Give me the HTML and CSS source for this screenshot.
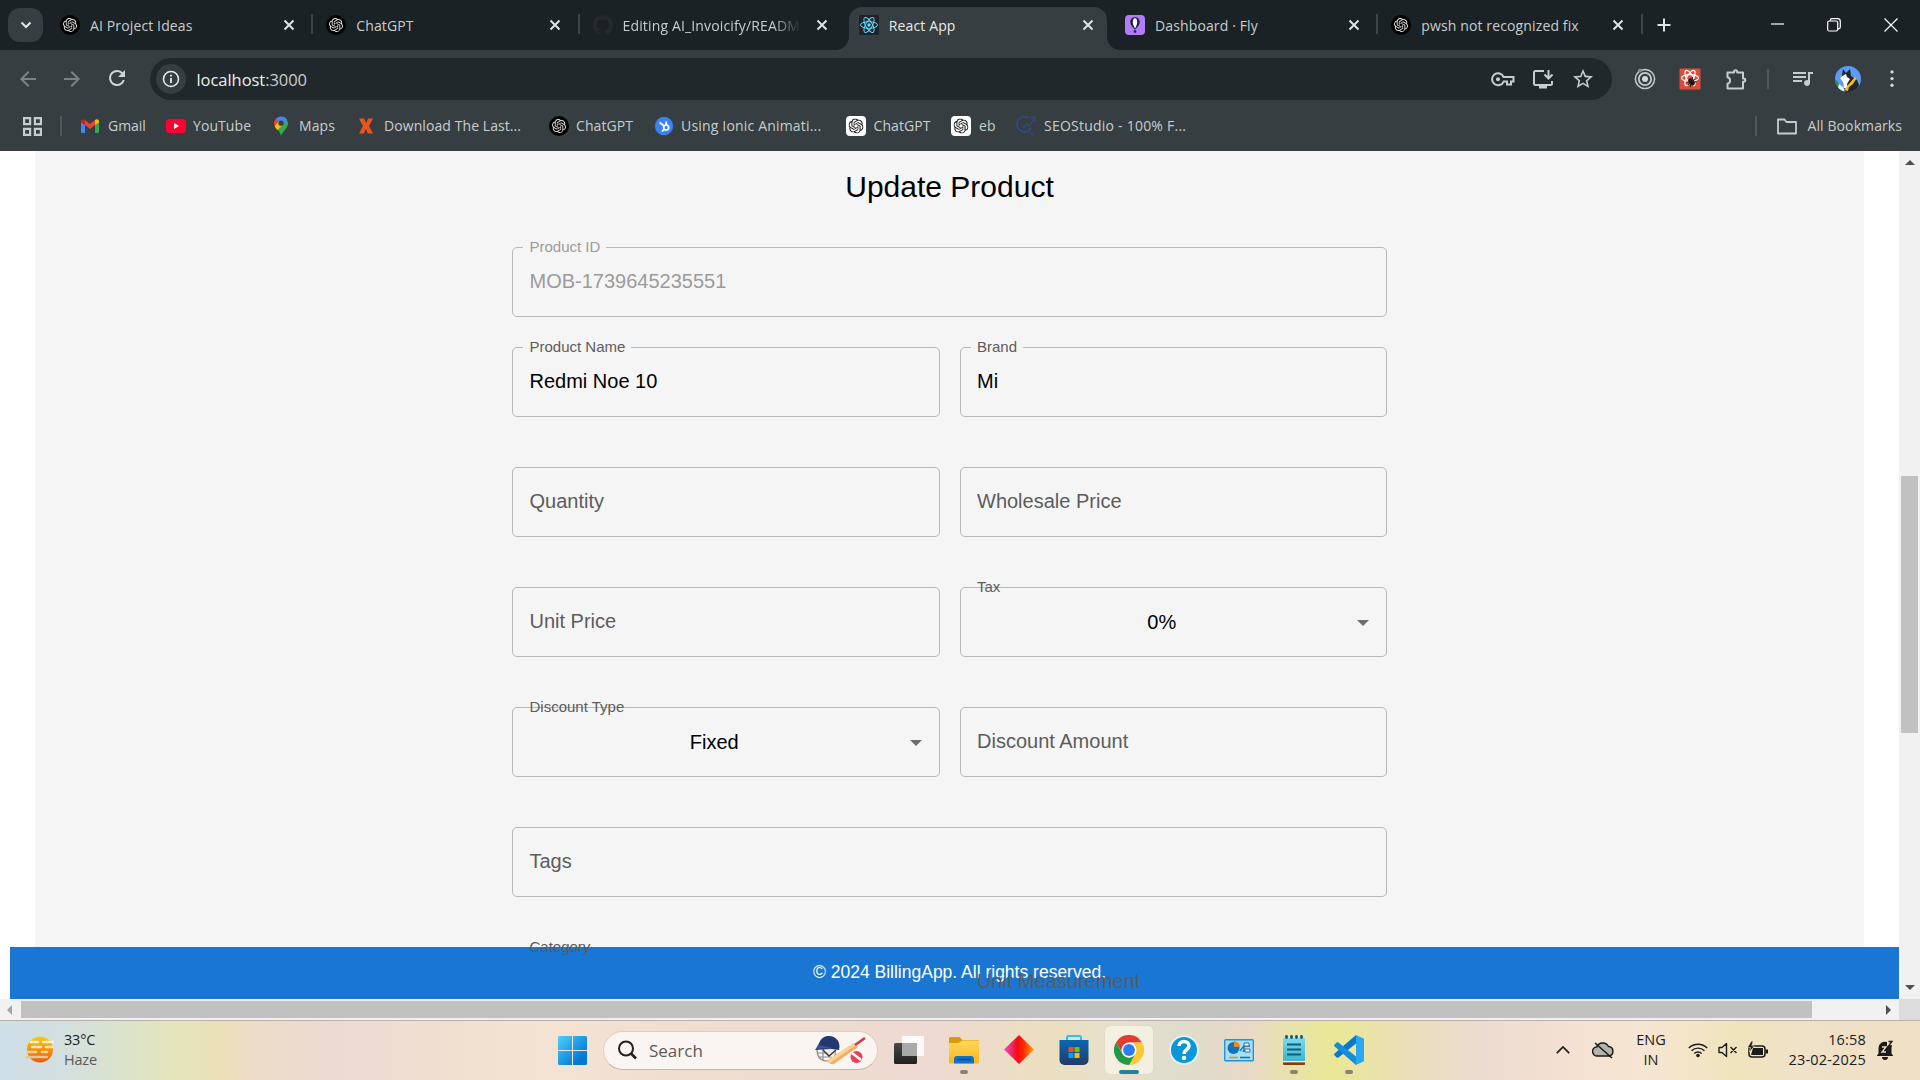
FILE: index.html
```html
<!DOCTYPE html>
<html lang="en">
<head>
<meta charset="utf-8">
<title>React App</title>
<link rel="stylesheet" href="styles.css">
</head>
<body>
<svg class="defs" aria-hidden="true">
  <symbol id="gpt" viewBox="0 0 24 24"><path d="M22.2819 9.8211a5.9847 5.9847 0 0 0-.5157-4.9108 6.0462 6.0462 0 0 0-6.5098-2.9A6.0651 6.0651 0 0 0 4.9807 4.1818a5.9847 5.9847 0 0 0-3.9977 2.9 6.0462 6.0462 0 0 0 .7427 7.0966 5.98 5.98 0 0 0 .511 4.9107 6.051 6.051 0 0 0 6.5146 2.9001A5.9847 5.9847 0 0 0 13.2599 24a6.0557 6.0557 0 0 0 5.7718-4.2058 5.9894 5.9894 0 0 0 3.9977-2.9001 6.0557 6.0557 0 0 0-.7475-7.0729zm-9.022 12.6081a4.4755 4.4755 0 0 1-2.8764-1.0408l.1419-.0804 4.7783-2.7582a.7948.7948 0 0 0 .3927-.6813v-6.7369l2.02 1.1686a.071.071 0 0 1 .038.052v5.5826a4.504 4.504 0 0 1-4.4945 4.4944zm-9.6607-4.1254a4.4708 4.4708 0 0 1-.5346-3.0137l.142.0852 4.783 2.7582a.7712.7712 0 0 0 .7806 0l5.8428-3.3685v2.3324a.0804.0804 0 0 1-.0332.0615L9.74 19.9502a4.4992 4.4992 0 0 1-6.1408-1.6464zM2.3408 7.8956a4.485 4.485 0 0 1 2.3655-1.9728V11.6a.7664.7664 0 0 0 .3879.6765l5.8144 3.3543-2.0201 1.1685a.0757.0757 0 0 1-.071 0l-4.8303-2.7865A4.504 4.504 0 0 1 2.3408 7.872zm16.5963 3.8558L13.1038 8.364 15.1192 7.2a.0757.0757 0 0 1 .071 0l4.8303 2.7913a4.4944 4.4944 0 0 1-.6765 8.1042v-5.6772a.79.79 0 0 0-.407-.667zm2.0107-3.0231l-.142-.0852-4.7735-2.7818a.7759.7759 0 0 0-.7854 0L9.409 9.2297V6.8974a.0662.0662 0 0 1 .0284-.0615l4.8303-2.7866a4.4992 4.4992 0 0 1 6.6802 4.66zM8.3065 12.863l-2.02-1.1638a.0804.0804 0 0 1-.038-.0567V6.0742a4.4992 4.4992 0 0 1 7.3757-3.4537l-.142.0805L8.704 5.459a.7948.7948 0 0 0-.3927.6813zm1.0976-2.3654l2.602-1.4998 2.6069 1.4998v2.9994l-2.5974 1.4997-2.6067-1.4997Z"/></symbol>
  <symbol id="gpt-dark" viewBox="0 0 20 20"><circle cx="10" cy="10" r="10" fill="#000"/><use href="#gpt" x="3" y="3" width="14" height="14" fill="#e4e4e4"/></symbol>
  <symbol id="gpt-light" viewBox="0 0 20 20"><rect width="20" height="20" rx="4" fill="#fff"/><use href="#gpt" x="2.5" y="2.5" width="15" height="15" fill="#111"/></symbol>
  <symbol id="x" viewBox="0 0 12 12"><path d="M1.5 1.5l9 9M10.5 1.5l-9 9" fill="none" stroke="currentColor" stroke-width="2"/></symbol>
</svg>

<header class="browser">
  <div class="tabstrip">
    <div class="tab-search"><svg width="12" height="8" viewBox="0 0 12 8"><path d="M1.5 1.5L6 6l4.500-4.500" fill="none" stroke="#dfe3e4" stroke-width="2.200"/></svg></div>
    <div class="tabs">
      <div class="tab"><svg class="fav"><use href="#gpt-dark"/></svg><span class="tab-title">AI Project Ideas</span><svg class="tab-x"><use href="#x"/></svg></div>
      <div class="tab"><svg class="fav"><use href="#gpt-dark"/></svg><span class="tab-title">ChatGPT</span><svg class="tab-x"><use href="#x"/></svg></div>
      <div class="tab no-sep"><svg class="fav" viewBox="0 0 24 24"><path fill="#262a2e" d="M12 .3a12 12 0 0 0-3.800 23.400c.6.1.8-.3.8-.6v-2c-3.300.7-4-1.600-4-1.600-.6-1.400-1.400-1.800-1.400-1.800-1-.7.1-.7.1-.7 1.200 0 1.900 1.200 1.900 1.200 1 1.800 2.800 1.300 3.500 1 0-.8.4-1.300.7-1.600-2.700-.3-5.500-1.300-5.500-6 0-1.200.5-2.300 1.300-3.100-.2-.4-.6-1.600 0-3.200 0 0 1-.3 3.400 1.200a11.500 11.500 0 0 1 6 0c2.300-1.500 3.300-1.200 3.300-1.200.6 1.600.2 2.800 0 3.200.9.8 1.300 1.900 1.300 3.200 0 4.600-2.800 5.600-5.500 5.900.5.4.9 1 .9 2.200v3.300c0 .3.1.7.8.6A12 12 0 0 0 12 .3"/></svg><span class="tab-title fade">Editing AI_Invoicify/README.md</span><svg class="tab-x"><use href="#x"/></svg></div>
      <div class="tab active no-sep"><svg class="fav" viewBox="0 0 20 20"><rect width="20" height="20" rx="1.500" fill="#20232a"/><g fill="none" stroke="#61dafb" stroke-width="1"><ellipse cx="10" cy="10" rx="8.500" ry="3.300"/><ellipse cx="10" cy="10" rx="8.500" ry="3.300" transform="rotate(60 10 10)"/><ellipse cx="10" cy="10" rx="8.500" ry="3.300" transform="rotate(120 10 10)"/></g><circle cx="10" cy="10" r="1.700" fill="#61dafb"/></svg><span class="tab-title">React App</span><svg class="tab-x"><use href="#x"/></svg></div>
      <div class="tab"><svg class="fav" viewBox="0 0 20 20"><rect width="20" height="20" rx="4" fill="#b07df5"/><path d="M10 2.200c3 0 4.700 2.200 4.700 4.800 0 2.600-1.700 4.600-4.700 7.800-3-3.200-4.700-5.200-4.700-7.800 0-2.600 1.700-4.800 4.700-4.800z" fill="#261a4f"/><path d="M10 3.200c1.700 0 2.200 2 2.200 3.800S11.400 11.300 10 13.500C8.600 11.300 7.800 8.800 7.800 7s.5-3.800 2.200-3.800z" fill="#fff"/><rect x="8.700" y="15.200" width="2.600" height="2.500" rx=".8" fill="#261a4f"/></svg><span class="tab-title">Dashboard · Fly</span><svg class="tab-x"><use href="#x"/></svg></div>
      <div class="tab last"><svg class="fav"><use href="#gpt-dark"/></svg><span class="tab-title">pwsh not recognized fix</span><svg class="tab-x"><use href="#x"/></svg></div>
    </div>
    <svg class="new-tab" viewBox="0 0 14 14"><path d="M7 .5v13M.5 7h13" stroke="#dfe3e4" stroke-width="2"/></svg>
    <div class="win-controls">
      <svg width="14" height="14" viewBox="0 0 14 14"><path d="M1 6h13" stroke="#fff" stroke-width="1.200"/></svg>
      <svg width="14" height="14" viewBox="0 0 14 14"><g fill="none" stroke="#fff" stroke-width="1.200"><rect x=".7" y="3" width="10" height="10" rx="1.500"/><path d="M3.200 3V2.500A1.800 1.800 0 0 1 5 .7h5.500a2.800 2.800 0 0 1 2.800 2.800V9a1.800 1.800 0 0 1-1.800 1.800H11"/></g></svg>
      <svg width="14" height="14" viewBox="0 0 14 14"><path d="M.5.5l13 13M13.500.5l-13 13" stroke="#fff" stroke-width="1.200"/></svg>
    </div>
  </div>

  <div class="toolbar">
    <div class="nav">
      <svg class="dim" viewBox="0 0 24 24"><path d="M20 11H7.830l5.590-5.590L12 4l-8 8 8 8 1.410-1.410L7.830 13H20z"/></svg>
      <svg class="dim" viewBox="0 0 24 24"><path d="M4 13h12.170l-5.590 5.590L12 20l8-8-8-8-1.410 1.410L16.170 11H4z"/></svg>
      <svg viewBox="0 0 24 24"><path d="M17.650 6.350A7.950 7.950 0 0 0 12 4a8 8 0 1 0 7.730 10h-2.080A6 6 0 1 1 12 6c1.660 0 3.140.69 4.220 1.780L13 11h7V4z"/></svg>
    </div>
    <div class="omnibox">
      <span class="site-info"><svg viewBox="0 0 20 20" width="20" height="20"><circle cx="10" cy="10" r="7.500" fill="none" stroke="#e8eaea" stroke-width="1.600"/><path d="M10 9v5M10 5.800v1.800" stroke="#e8eaea" stroke-width="1.800"/></svg></span>
      <span class="url"><b>localhost</b>:3000</span>
      <div class="omni-icons">
        <svg viewBox="0 0 24 24"><g fill="none" stroke="#c7cccd" stroke-width="2"><path d="M12.600 10a6 6 0 1 0 0 4.500H16v3h4v-3h2.500V10z"/></g><circle cx="7" cy="12.200" r="2" fill="#c7cccd"/></svg>
        <svg viewBox="0 0 24 24"><path d="M13 4H4.500A1.500 1.500 0 0 0 3 5.500v11A1.500 1.500 0 0 0 4.500 18h15a1.500 1.500 0 0 0 1.500-1.500V14M17.500 3v8M13.500 7.500l4 4 4-4" fill="none" stroke="#c7cccd" stroke-width="2"/><path d="M8 18h8v3.500H8z" fill="#c7cccd"/></svg>
        <svg viewBox="0 0 24 24"><path fill="#c7cccd" d="M22 9.240l-7.190-.62L12 2 9.190 8.630 2 9.240l5.460 4.730L5.820 21 12 17.270 18.180 21l-1.630-7.030zM12 15.400l-3.760 2.270 1-4.280-3.320-2.880 4.380-.38L12 6.100l1.710 4.040 4.380.38-3.320 2.880 1 4.280z"/></svg>
      </div>
    </div>
    <div class="extensions">
      <svg viewBox="0 0 22 22"><g fill="none" stroke="#c9cccd"><circle cx="11" cy="11" r="9.600" stroke-width="1.500"/><circle cx="11" cy="11" r="6.200" stroke-width="1.800"/></g><circle cx="11" cy="11" r="3" fill="#d5d8d9"/><circle cx="6" cy="2.500" r="2" fill="#8b8f90"/></svg>
      <svg viewBox="0 0 22 22"><rect x=".5" y=".5" width="21" height="21" rx="1" fill="#dd4b39"/><g fill="none" stroke="#fff" stroke-width="1.200"><ellipse cx="11" cy="10" rx="8.500" ry="3.300"/><ellipse cx="11" cy="10" rx="8.500" ry="3.300" transform="rotate(60 11 10)"/><ellipse cx="11" cy="10" rx="8.500" ry="3.300" transform="rotate(120 11 10)"/></g><g transform="rotate(-40 12.500 14)"><ellipse cx="12.500" cy="14" rx="2.600" ry="4" fill="#2a1614"/><path d="M8.500 11l8 6M8.500 17l8-6M8 14h9" stroke="#2a1614" stroke-width="1.100"/></g></svg>
      <svg viewBox="0 0 22 22"><path d="M2.500 4.500h6.500V3.800a1.600 1.600 0 0 1 3.200 0v.7h5.800v6h.7a1.600 1.600 0 0 1 0 3.200H18V20.500H2.500v-4.700a3.400 3.400 0 0 0 0-6.600z" fill="none" stroke="#c7cccd" stroke-width="2" stroke-linejoin="round"/></svg>
      <i class="bar"></i>
      <svg viewBox="0 0 24 24"><path fill="#c7cccd" d="M15 5H2v2h13zm0 4H2v2h13zM2 15h9v-2H2zM17 5v8.180A3 3 0 1 0 19 16V7h3V5z"/></svg>
      <svg class="avatar" viewBox="0 0 26 26"><clipPath id="av"><circle cx="13" cy="13" r="13"/></clipPath><g clip-path="url(#av)"><path fill="#5b9bf5" d="M0 0h26v26H0z"/><path fill="#2e8a4e" d="M0 13l3 3 3 6-2 4H0z"/><path fill="#e4f2ff" d="M4 18l5 4v4H2z"/><path fill="#23262c" d="M7 9L8 3l3 4 4-4 1 7 6 4 2 5-3 7H10z"/><path fill="#fff" d="M5 12l4-3 2-1 1 3 3 2-3 5 1 4H9l-1-6z"/><path fill="#fbbd1e" d="M20 11l1.500 1.500L18 18l-4 3-1 4-4-1 4-5z"/></g></svg>
      <svg viewBox="0 0 24 24"><g fill="#d5d9da"><circle cx="12" cy="3.500" r="2"/><circle cx="12" cy="11.500" r="2"/><circle cx="12" cy="19.500" r="2"/></g></svg>
    </div>
  </div>

  <div class="bookmarks">
    <svg class="apps" viewBox="0 0 19 19"><g fill="none" stroke="#c7cccd" stroke-width="2.200"><path d="M1.100 1.100h6v6h-6zM11.900 1.100h6v6h-6zM1.100 11.900h6v6h-6zM11.900 11.900h6v6h-6z"/></g></svg>
    <i class="bar"></i>
    <a class="bm bm-gmail"><svg viewBox="0 0 20 20"><path fill="#4285f4" d="M1 5l4 3v9H2a1 1 0 0 1-1-1z"/><path fill="#34a853" d="M19 5l-4 3v9h3a1 1 0 0 0 1-1z"/><path fill="#ea4335" d="M5 4l5 4 5-4v5l-5 4-5-4z"/><path fill="#c5221f" d="M1 5.500C1 3.500 3.300 2.500 5 4v5L1 6.500z"/><path fill="#fbbc04" d="M19 5.500c0-2-2.300-3-4-1.500v5l4-2.500z"/></svg><span>Gmail</span></a>
    <a class="bm bm-yt"><svg viewBox="0 0 20 20"><rect y="3" width="20" height="14" rx="3.500" fill="#ff0033"/><path d="M8 7v6l5-3z" fill="#fff"/></svg><span>YouTube</span></a>
    <a class="bm bm-maps"><svg viewBox="0 0 20 20"><path fill="#34a853" d="M10 20c-.8-3.600-2.500-5.500-4.300-7.700L14 3l2.300 1.500A7 7 0 0 1 17 7.500c0 5-5.400 7.500-7 12.500z"/><path fill="#4285f4" d="M5 2.500A7 7 0 0 1 16 3.800L9.500 12z"/><path fill="#ea4335" d="M5 2.500L8.200 6 4 10.500A7 7 0 0 1 5 2.500z"/><path fill="#fbbc04" d="M3.600 10l4.500-5 3.800 3.800-5.400 5.500A14 14 0 0 1 3.600 10z"/><path fill="#4285f4" d="M12 6.300l4-2.500a7 7 0 0 0-3.500-3z"/><circle cx="10" cy="7.200" r="2.600" fill="#363e41"/></svg><span>Maps</span></a>
    <a class="bm bm-x"><svg viewBox="0 0 20 20"><path fill="#e8541c" d="M3 2.500h5L10.200 7l2-4.500H17L13 10l4 7.500h-5L9.800 13l-2 4.500H3L7 10z"/></svg><span>Download The Last...</span></a>
    <a class="bm bm-gpt"><svg><use href="#gpt-dark"/></svg><span>ChatGPT</span></a>
    <a class="bm bm-ionic"><svg viewBox="0 0 20 20"><circle cx="10" cy="10" r="9.200" fill="#3b82f6"/><g fill="none" stroke="#fff" stroke-width="1.700"><circle cx="12.200" cy="11.500" r="2.500"/><path d="M12.200 9V5.500M10.300 10L5.500 6.500M10.300 13.200L8 15.500"/></g></svg><span>Using Ionic Animati...</span></a>
    <a class="bm bm-gpt2"><svg><use href="#gpt-light"/></svg><span>ChatGPT</span></a>
    <a class="bm bm-eb"><svg><use href="#gpt-light"/></svg><span>eb</span></a>
    <a class="bm bm-seo"><svg viewBox="0 0 20 20"><g fill="none" stroke="#2f4a8c" stroke-width="1.700"><path d="M12.500 2A7.500 7.500 0 1 0 15 12"/><path d="M12.500 14.500l4.500 5M7 12l4-4 2 2 6-8M14.500 1.500H19V6" stroke-width="1.300"/></g></svg><span>SEOStudio - 100% F...</span></a>
    <i class="bar bar-end"></i>
    <a class="bm bm-all"><svg viewBox="0 0 20 20"><path d="M1 3.500h6.500l2 2.500H19v11.500H1z" fill="none" stroke="#c7cccd" stroke-width="1.800" stroke-linejoin="round"/></svg><span>All Bookmarks</span></a>
  </div>
</header>

<div class="viewport">
  <main class="page">
    <div class="panel">
      <h1>Update Product</h1>
      <form class="form">
        <div class="field wide first disabled"><label class="small notched">Product ID</label><span>MOB-1739645235551</span></div>
        <div class="field"><label class="small notched">Product Name</label><span>Redmi Noe 10</span></div>
        <div class="field"><label class="small notched">Brand</label><span>Mi</span></div>
        <div class="field"><label>Quantity</label></div>
        <div class="field"><label>Wholesale Price</label></div>
        <div class="field"><label>Unit Price</label></div>
        <div class="field select"><label class="small">Tax</label><span>0%</span></div>
        <div class="field select"><label class="small">Discount Type</label><span>Fixed</span></div>
        <div class="field"><label>Discount Amount</label></div>
        <div class="field wide"><label>Tags</label></div>
        <div class="field select"><label class="small">Category</label></div>
        <div class="field"><label>Unit Measurement</label></div>
      </form>
    </div>
    <footer class="footer">© 2024 BillingApp. All rights reserved.</footer>
  </main>
  <div class="vscroll"><i class="arrow up"></i><i class="vthumb"></i><i class="arrow down"></i></div>
  <div class="hscroll"><i class="arrow left"></i><i class="hthumb"></i><i class="arrow right"></i></div>
  <div class="corner"></div>
</div>

<div class="taskbar">
  <div class="weather">
    <svg width="32" height="32" viewBox="0 0 32 32"><defs><linearGradient id="sun" x2="0" y2="1"><stop offset="0" stop-color="#ffcc0a"/><stop offset="1" stop-color="#e8590c"/></linearGradient></defs><circle cx="16" cy="15.500" r="13" fill="url(#sun)"/><g stroke-linecap="round" stroke-width="2.600"><path d="M7 8h7M19 8h10" stroke="#f8efd2"/><path d="M8 13h9M22 13h6" stroke="#f8e6b8"/><path d="M3 18h9M18 18h5" stroke="#f0d29c"/><path d="M3 23h20" stroke="#e3c69a"/></g></svg>
    <div class="weather-text"><span>33°C</span><span class="muted">Haze</span></div>
  </div>
  <div class="dock">
    <span class="app start"><svg width="29" height="29" viewBox="0 0 29 29"><defs><linearGradient id="win" x2="1" y2="1"><stop offset="0" stop-color="#4fd0ff"/><stop offset=".8" stop-color="#0078d4"/></linearGradient></defs><path fill="url(#win)" d="M1 0h13v14H0V1zM15 0h13l1 1v13H15zM0 15h14v14H1l-1-1zM15 15h14v13l-1 1H15z"/></svg></span>
    <div class="search">
      <svg width="20" height="20" viewBox="0 0 20 20"><circle cx="9" cy="8.500" r="7" fill="none" stroke="#222" stroke-width="2"/><path d="M14 13.500l5 5" stroke="#222" stroke-width="2.600"/></svg>
      <span>Search</span>
      <svg class="cricket" width="52" height="30" viewBox="0 0 52 30"><g fill="none" stroke="#8f8d8c" stroke-width="1.200"><path d="M3 14c0 7 3 12 10 12s9-4 8-11M3 18h12M5 22h13M9 14v11"/></g><path d="M13 14l9 1-4 7-4-2z" fill="#f2ece8"/><path d="M9 15l6 6 7-6" fill="none" stroke="#3a3432" stroke-width="1.400"/><path d="M1 15C5 13 4 2 14 1c9-.5 13 7 11 14l-8-1z" fill="#22386e"/><path d="M1 15c4-2 10-2 15-1l2-1-14-3z" fill="#3b5796"/><path d="M40 8l4 4-24 17c-3 1-6-1-6-4z" fill="#f0ae66"/><path d="M40 8l2 2-26 18-2-3z" fill="#ffd196"/><path d="M41 10l10-7" stroke="#d8344e" stroke-width="2.600"/><circle cx="42.500" cy="22" r="6" fill="#e83e5c"/><path d="M38 18l9 7" stroke="#fff" stroke-width="2.500"/></svg>
    </div>
    <span class="app"><svg width="30" height="30" viewBox="0 0 30 30"><defs><linearGradient id="tv" x2="0" y2="1"><stop offset="0" stop-color="#4a4a4a"/><stop offset="1" stop-color="#202020"/></linearGradient></defs><rect y="8" width="23" height="21" rx="1.500" fill="url(#tv)"/><rect x="8" y="1" width="22" height="20" rx="1" fill="#fff" opacity=".85"/><path d="M8 8h15v13H9a1 1 0 0 1-1-1z" fill="#a9a9a9"/></svg></span>
    <span class="app run"><svg width="30" height="30" viewBox="0 0 30 30"><defs><linearGradient id="fo" x2="0" y2="1"><stop offset="0" stop-color="#ffd75e"/><stop offset="1" stop-color="#fbb514"/></linearGradient></defs><path d="M0 3.500A1.500 1.500 0 0 1 1.500 2h9l3 3H29a1 1 0 0 1 1 1v4H0z" fill="#dc9a08"/><path d="M0 8h9.500l4-2.500H30v21.500a1.500 1.500 0 0 1-1.500 1.500h-27A1.500 1.500 0 0 1 0 27z" fill="url(#fo)"/><path d="M5 28.500V24a3 3 0 0 1 3-3h14a3 3 0 0 1 3 3v4.500z" fill="#0f74c8"/><path d="M9 24.500h12" stroke="#084a86" stroke-width="1.500" stroke-linecap="round"/></svg></span>
    <span class="app"><svg width="30" height="30" viewBox="0 0 30 30"><defs><linearGradient id="di"><stop offset="0" stop-color="#f04bd0"/><stop offset=".45" stop-color="#f60a14"/><stop offset=".65" stop-color="#ff2a00"/><stop offset="1" stop-color="#ffa61a"/></linearGradient></defs><path d="M15 0l15 14.500L15 29 0 14.500z" fill="url(#di)"/></svg></span>
    <span class="app"><svg width="30" height="30" viewBox="0 0 30 30"><defs><linearGradient id="st" x2="0" y2="1"><stop offset="0" stop-color="#0967b4"/><stop offset="1" stop-color="#223a66"/></linearGradient></defs><path d="M8 7V2.500A1.500 1.500 0 0 1 9.500 1h11A1.500 1.500 0 0 1 22 2.500V7" fill="none" stroke="#2cc0f4" stroke-width="2"/><path d="M.5 5h29v20a5 5 0 0 1-5 5h-19a5 5 0 0 1-5-5z" fill="url(#st)"/><path fill="#f25022" d="M9.500 12h5v5h-5z"/><path fill="#7fba00" d="M15.500 12h5v5h-5z"/><path fill="#00a4ef" d="M9.500 18h5v5h-5z"/><path fill="#ffb900" d="M15.500 18h5v5h-5z"/></svg></span>
    <span class="app current"><svg width="30" height="30" viewBox="0 0 48 48"><path fill="#e33b2e" d="M3.200 12A24 24 0 0 1 44.800 12H24L14 30z"/><path fill="#fcc934" d="M44.800 12A24 24 0 0 1 24 48l10.400-18L32 12z"/><path fill="#1e9a48" d="M3.200 12l10.400 18A12 12 0 0 0 34.400 30L24 48A24 24 0 0 1 3.200 12z"/><circle cx="24" cy="24" r="12" fill="#fff"/><circle cx="24" cy="24" r="9.500" fill="#2f7cf0"/></svg></span>
    <span class="app"><svg width="30" height="30" viewBox="0 0 30 30"><circle cx="15" cy="15" r="14.800" fill="#e6f3fa"/><circle cx="15" cy="15" r="13" fill="#0a97d9"/><path d="M10 11c0-6 10-6 10 0 0 3.500-5 4-5 8" fill="none" stroke="#fff" stroke-width="3.600"/><circle cx="15" cy="23" r="2.200" fill="#fff"/></svg></span>
    <span class="app"><svg width="30" height="30" viewBox="0 0 30 30"><rect x=".7" y="4.700" width="28.600" height="21" rx="1" fill="#a9e0f8" stroke="#2494d4" stroke-width="1.400"/><circle cx="9.500" cy="13" r="6" fill="#1672b8"/><path d="M10 12V6a6 6 0 0 1 6 6z" fill="#f28a14"/><path d="M16 16l4-5h6M20 11v5h6M20 15l-1 2" fill="none" stroke="#2072b0" stroke-width="1.300"/><g fill="#fff" stroke="#2072b0"><path d="M20 8h5v3h-5zM21 14h5v3h-5z"/></g><path d="M5 22.500h9" stroke="#f28a14" stroke-width="1.600"/><path d="M16 22.500h10" stroke="#1672b8" stroke-width="1.600"/></svg></span>
    <span class="app run"><svg width="30" height="30" viewBox="0 0 30 30"><defs><linearGradient id="np" x2="0" y2="1"><stop offset="0" stop-color="#7fd9ea"/><stop offset="1" stop-color="#3cb5cf"/></linearGradient></defs><path d="M4 26h22v3a1 1 0 0 1-1 1H5a1 1 0 0 1-1-1z" fill="#8a3d0a"/><path d="M4 25h22v2.300H4z" fill="#fff"/><path d="M5 3h20a1 1 0 0 1 1 1v22H4V4a1 1 0 0 1 1-1z" fill="url(#np)"/><path d="M8 9.500h14M8 14.500h14M8 19.500h14" stroke="#08607c" stroke-width="2"/><path d="M7.500 1.400v1.200M12.500 1.400v1.200M17.500 1.400v1.200M22.500 1.400v1.200" stroke="#0a5c75" stroke-width="2.800" stroke-linecap="round"/></svg></span>
    <span class="app run"><svg width="30" height="30" viewBox="0 0 30 30"><path d="M22 0l8 3.700v22.600L22 30z" fill="#2aa7f2"/><path d="M22 0v8.500L4.500 22.500c-.6.500-1.300.4-1.800 0L.6 20.600c-.7-.6-.7-1.600 0-2.200z" fill="#0b78c6"/><path d="M22 30v-8.500L4.500 7.500c-.6-.5-1.300-.4-1.800 0L.6 9.400c-.7.6-.7 1.600 0 2.200z" fill="#168cdc"/></svg></span>
  </div>
  <div class="tray">
    <svg class="t-chev" viewBox="0 0 14 8"><path d="M.8 7.200L7 1l6.200 6.200" fill="none" stroke="#1b1b1b" stroke-width="1.700"/></svg>
    <svg class="t-cloud" viewBox="0 0 22 18"><path d="M5.500 15a4.500 4.500 0 0 1-.8-9A6.500 6.500 0 0 1 16.500 5.500a4.800 4.800 0 0 1 .5 9.500z" fill="#b5b3ae" stroke="#1b1b1b" stroke-width="1.500"/><path d="M3 2l17 15" stroke="#1b1b1b" stroke-width="1.600"/></svg>
    <div class="t-lang"><span>ENG</span><span>IN</span></div>
    <svg class="t-wifi" viewBox="0 0 20 16"><g fill="none" stroke="#1b1b1b" stroke-width="1.400"><path d="M.8 6a13 13 0 0 1 18.400 0M3.600 8.800a9 9 0 0 1 12.800 0M6.300 11.500a5.200 5.200 0 0 1 7.400 0"/></g><circle cx="10" cy="13.500" r="1.800" fill="#1b1b1b"/></svg>
    <svg class="t-vol" viewBox="0 0 20 16"><path d="M1 5.500h3L8.500 1.500v13L4 10.500H1zM12.500 5l6 6M18.500 5l-6 6" fill="none" stroke="#1b1b1b" stroke-width="1.400" stroke-linejoin="round"/></svg>
    <svg class="t-bat" viewBox="0 0 20 16"><rect x="1" y="4" width="16" height="11" rx="3" fill="none" stroke="#1b1b1b" stroke-width="1.500"/><path d="M5 6h10v7H3z" fill="#1b1b1b"/><path d="M17.500 7.500h2.500v4h-2.500z" fill="#1b1b1b"/><path d="M3.500-1L-.5 5.500H2.500L1.500 10l5-6H3.800L5-1z" fill="#1b1b1b" stroke="#efe4bd" stroke-width=".6"/></svg>
    <div class="t-clock"><span>16:58</span><span>23-02-2025</span></div>
    <svg class="t-bell" viewBox="0 0 18 20"><path d="M1 15.500l1.500-2V8a6.500 6.500 0 0 1 8.500-6v4h4.500v7.500l1.500 2V16H1zM6 17h6a3 3 0 0 1-6 0z" fill="#1b1b1b"/><path d="M6 7h4l-4 5h4" fill="none" stroke="#efe0c6" stroke-width="1.300"/><path d="M12.500 1.500H16L12.500 6H16" fill="none" stroke="#1b1b1b" stroke-width="1.300"/></svg>
  </div>
</div>
</body>
</html>
```
FILE: styles.css
```css
* { box-sizing: border-box; }
body {
  margin: 0;
  width: 1920px;
  height: 1080px;
  overflow: hidden;
  display: flex;
  flex-direction: column;
  font-family: "Open Sans", "Noto Sans", sans-serif;
  background: #fff;
}
.defs { position: absolute; width: 0; height: 0; }
svg { display: block; flex: none; }

/* Browser chrome */
.browser { height: 151px; background: #363e41; color: #c9cdce; font-size: 14px; flex: none; }
.tabstrip { height: 50px; background: #1a2225; display: flex; align-items: center; }
.tab-search {
  width: 35px; height: 34px; margin-left: 8px; border-radius: 12px;
  background: #363e41; display: flex; align-items: center; justify-content: center;
}
.tabs { display: flex; margin-left: 3px; height: 50px; }
.tab {
  position: relative; width: 266.250px; padding: 0 17.500px 0 14px;
  display: flex; align-items: center; gap: 10px; letter-spacing: 0.130px;
}
.tab::after {
  content: ""; position: absolute; right: -1px; top: 14px;
  width: 2px; height: 20px; background: #3d4548;
}
.tab.no-sep::after { display: none; }
.tab.last { width: 265px; padding-right: 18px; }
.fav { width: 20px; height: 20px; }
.tab-title { flex: 1; white-space: nowrap; overflow: hidden; line-height: 24px; padding-top: 1px; }
.tab-title.fade {
  flex: 0 0 178px; margin-right: 5px; letter-spacing: 0.150px;
  -webkit-mask-image: linear-gradient(90deg, #000 84%, transparent);
  mask-image: linear-gradient(90deg, #000 84%, transparent);
}
.tab-x { width: 12px; height: 12px; color: #dfe3e4; }
.active { color: #e8eaea; z-index: 0; }
.active::before {
  content: ""; position: absolute; z-index: -1; left: 4px; right: 4px; top: 7px; bottom: 0;
  background: #363e41; border-radius: 13px 13px 0 0;
}
/* Curved feet joining the active tab to the toolbar */
.tab.active::after {
  display: block; z-index: -2; top: auto; left: -9px; right: -9px; bottom: 0; width: auto; height: 13px;
  background:
    radial-gradient(circle at 0 0, transparent 12.500px, #363e41 13.200px) left / 13px 13px no-repeat,
    radial-gradient(circle at 13px 0, transparent 12.500px, #363e41 13.200px) right / 13px 13px no-repeat;
}
.new-tab { width: 14px; height: 14px; margin-left: 15px; }
.win-controls { display: flex; gap: 43px; margin-left: auto; margin-right: 22px; }

.toolbar { height: 58px; display: flex; align-items: center; }
.nav { display: flex; gap: 20.500px; margin-left: 15.500px; width: 134.500px; }
.nav svg { width: 24px; height: 24px; fill: #d0d4d5; }
.nav svg:last-child { margin-left: .5px; margin-top: -1px; }
.nav svg.dim { fill: #7c8386; }
.omnibox {
  width: 1462px; height: 42px; border-radius: 21px; background: #20282b;
  display: flex; align-items: center; padding: 0 17.500px 0 6px;
}
.site-info {
  width: 30px; height: 30px; border-radius: 50%; background: #363e41;
  display: flex; align-items: center; justify-content: center;
}
.url { margin-left: 10.500px; font-size: 16.500px; letter-spacing: -0.050px; }
.url b { font-weight: 400; color: #eceeee; }
.omni-icons { margin-left: auto; display: flex; gap: 16px; }
.omni-icons svg { width: 24px; height: 24px; }
.extensions { flex: 1; display: flex; align-items: center; padding-left: 22px; }
.extensions svg { width: 22px; height: 22px; }
.extensions svg:nth-child(2) { margin-left: 23px; }
.extensions svg:nth-child(3) { margin-left: 24px; }
.bar { width: 2px; height: 20px; background: #4f595c; flex: none; }
.extensions .bar { margin-left: 20px; }
.extensions svg:nth-child(5) { width: 24px; height: 24px; margin-left: 21.500px; }
.extensions .avatar { width: 26px; height: 26px; margin-left: 20px; }
.extensions svg:last-child { width: 20px; height: 20px; margin-left: 21px; }

.bookmarks { height: 36px; display: flex; align-items: center; }
.apps { width: 19px; height: 19px; margin-left: 23px; }
.apps + .bar { margin: 0 18px; }
.bm { display: flex; align-items: center; gap: 8px; white-space: nowrap; letter-spacing: 0.080px; }
.bm svg { width: 20px; height: 20px; }
.bm span { margin-top: -2px; }
.bm-gmail { width: 86px; letter-spacing: -0.050px; }
.bm-yt { width: 105px; gap: 7px; }
.bm-maps { width: 85px; }
.bm-x { width: 193px; }
.bm-gpt { width: 105px; gap: 7px; }
.bm-ionic { width: 192px; gap: 7px; letter-spacing: 0.180px; }
.bm-gpt2 { width: 105px; gap: 7.500px; }
.bm-eb { width: 65px; }
.bm-seo { letter-spacing: 0.230px; }
.bar-end { margin-left: auto; margin-right: 20px; }
.bm-all { width: 143px; gap: 10.500px; letter-spacing: 0.100px; }

/* Page */
.viewport {
  height: 869px; flex: none; display: grid;
  grid-template: 848px 21px / 1899px 21px;
  font-family: "Liberation Sans", Arial, sans-serif;
}
.page { position: relative; overflow: hidden; padding: 0 35px; background: #fff; }
.panel { width: 1829px; height: 900px; background: #f5f5f5; padding: 19px 477px 0; }
h1 { margin: 0; font-size: 30px; font-weight: 400; line-height: 34px; text-align: center; color: #000; }
.form { display: grid; grid-template-columns: 1fr 1fr; gap: 50px 20px; margin-top: 43px; }
.field {
  position: relative; height: 70px; border: 1px solid #b9b9b9; border-radius: 5px;
  padding: 0 16.500px; font-size: 20px; line-height: 66px; color: #000;
}
.wide { grid-column: span 2; }
.first { margin-bottom: -20px; }
.field label { color: #5c5c5c; position: relative; z-index: 3; }
.field label.small { position: absolute; left: 16.500px; top: -11px; font-size: 15px; line-height: 20px; white-space: nowrap; }
.field label.notched { left: 10px; padding: 0 6px 0 6.500px; background: #f5f5f5; }
.disabled, .disabled label.small { color: #9b9b9b; }
.select { text-align: center; line-height: 68px; padding-right: 39.500px; }
.select::after {
  content: ""; position: absolute; right: 17px; top: 32px;
  border: 6px solid transparent; border-top-color: #6d6d6d; border-bottom: 0;
}
.footer {
  position: absolute; left: 10px; right: 0; bottom: 0; height: 52px; z-index: 2; padding-left: 10px;
  background: #1976d2; color: #fff; font-size: 17.500px; line-height: 50px; text-align: center;
}
.vscroll, .hscroll { background: #f1f1f1; display: flex; align-items: center; }
.vscroll { flex-direction: column; }
.vthumb { width: 17px; height: 257px; margin-top: 311px; background: #c1c1c1; }
.hthumb { width: 1791px; height: 17px; margin-left: 9px; background: #c1c1c1; }
.corner { background: #dcdcdc; }
.arrow { width: 0; height: 0; border: 5px solid transparent; }
.up { border-bottom-color: #505050; border-top: 0; margin-top: 9px; }
.down { border-top-color: #505050; border-bottom: 0; margin-top: auto; margin-bottom: 9px; }
.left { border-right-color: #a3a3a3; border-left: 0; margin-left: 7px; }
.right { border-left-color: #505050; border-right: 0; margin-left: auto; margin-right: 8px; }

/* Taskbar */
.taskbar {
  height: 60px; border-top: 1px solid #b9b0a8; display: flex; align-items: center; padding-bottom: 1px;
  font-size: 14.500px; color: #1b1b1b;
  background: linear-gradient(90deg, #cfdfe8 0, #d3dfe0 60px, #dae3cc 120px, #e5e5bb 175px, #ecdfb8 225px, #eedcc8 250px, #eddad2 330px, #f2e0d0 480px, #f4e3d3 560px, #efddd0 700px, #eedad0 940px, #ecdfc0 1050px, #e6e0cc 1120px, #dfdccc 1185px, #e8d9c8 1250px, #e8e4a8 1295px, #e9e896 1335px, #ebdfb8 1400px, #ecdbd0 1480px, #f4e0d2 1560px, #f6e5d3 1640px, #f0e4bc 1740px, #efe2c8 1800px, #efdfc5 1920px);
}
.weather { display: flex; align-items: center; width: 544px; padding-left: 24px; gap: 8px; }
.weather-text { display: flex; flex-direction: column; line-height: 20px; letter-spacing: -0.200px; }
.muted { color: #5a5a5a; }
.dock { display: flex; align-items: center; width: 1012px; }
.app { position: relative; width: 48px; height: 48px; margin-right: 7px; display: flex; align-items: center; justify-content: center; border-radius: 5px; flex: none; }
.start { margin-right: 7px; margin-left: 4px; }
.current { background: #f3f0e2; box-shadow: 0 0 1px #c9c2ac; }
.run::after, .current::after {
  content: ""; position: absolute; bottom: 0; width: 8px; height: 4px; border-radius: 2px; background: #8a8275;
}
.current::after { width: 20px; background: #278299; }
.search {
  width: 275px; height: 39px; margin-right: 7px; border-radius: 20px; padding: 0 11px 0 13px;
  background: #fbf5f1; border: 1px solid #decfc5; border-bottom-color: #c6b6ad;
  display: flex; align-items: center; font-size: 17px; color: #5c5a59;
}
.search span { margin-left: 12px; }
.cricket { margin-left: auto; }
.tray { display: flex; align-items: center; }
.t-chev { width: 14px; height: 8px; }
.t-cloud { width: 22px; height: 18px; margin-left: 22px; }
.t-lang { width: 40px; margin-left: 17px; display: flex; flex-direction: column; text-align: center; line-height: 20px; }
.t-wifi { width: 20px; height: 16px; margin-left: 17px; }
.t-vol { width: 20px; height: 16px; margin-left: 10px; }
.t-bat { width: 20px; height: 16px; margin-left: 10px; overflow: visible; }
.t-clock { width: 98px; display: flex; flex-direction: column; text-align: right; line-height: 20px; letter-spacing: 0.180px; }
.t-bell { width: 18px; height: 20px; margin-left: 10px; }
```
